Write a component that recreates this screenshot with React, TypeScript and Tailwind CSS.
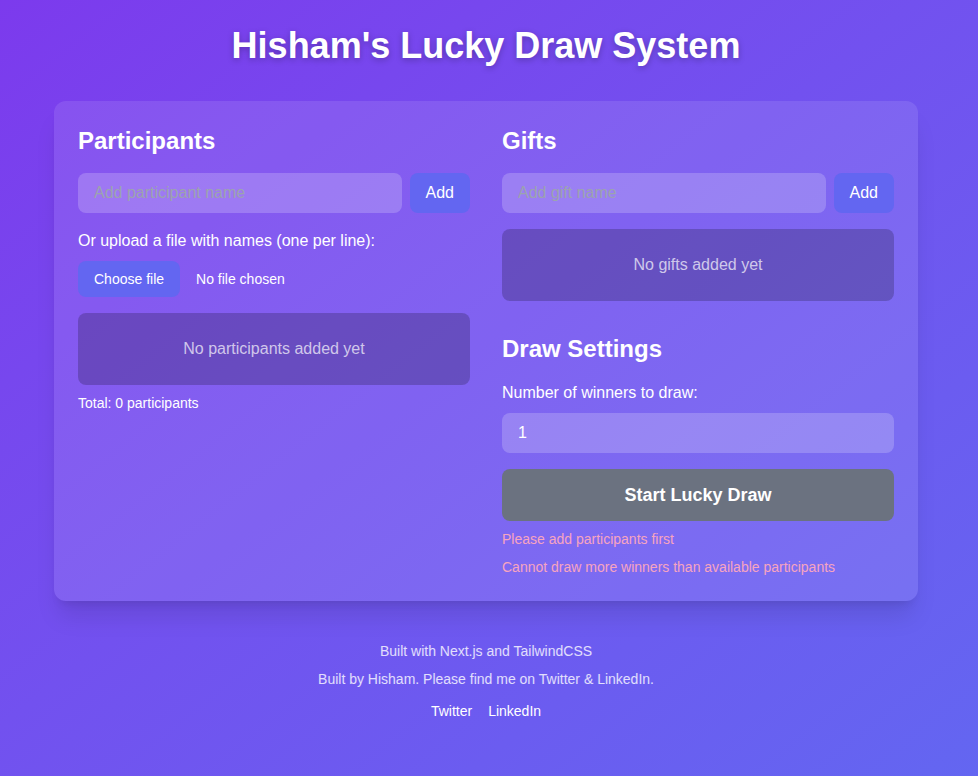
import React from "react";

export default function App() {
  return (
    <div
      className="min-h-[776px] w-full bg-linear-to-br from-[#7c3aed] to-[#6366f1] text-white"
      style={{ fontFamily: '"Liberation Sans", Arial, Helvetica, sans-serif' }}
    >
      <div className="ml-[54px] w-[864px] pt-[26px] pb-10">
        <h1 className="text-center text-[36px] leading-[40px] font-bold [text-shadow:0_2px_6px_rgba(0,0,0,0.25)]">
          Hisham's Lucky Draw System
        </h1>

        <div className="mt-[35px] rounded-xl bg-white/10 p-6 shadow-xl">
          <div className="grid grid-cols-2 gap-8">
            {/* Left column */}
            <div>
              <h2 className="mb-4 text-2xl font-bold">Participants</h2>
              <div className="mb-4 flex gap-2">
                <input
                  className="h-10 flex-1 rounded-lg bg-white/20 px-4 text-base text-white outline-none placeholder:text-[#9ca3af]"
                  placeholder="Add participant name"
                />
                <button className="h-10 rounded-lg bg-[#6366f1] px-4 text-base text-white">
                  Add
                </button>
              </div>
              <p className="mb-2 text-base">Or upload a file with names (one per line):</p>
              <div className="flex items-center">
                <span className="mr-4 rounded-lg bg-[#6366f1] px-4 py-2 text-sm leading-5">
                  Choose file
                </span>
                <span className="text-sm">No file chosen</span>
              </div>
              <div className="mt-4 rounded-lg bg-black/20 p-6 text-center text-base text-white/70">
                No participants added yet
              </div>
              <p className="mt-2 text-sm">Total: 0 participants</p>
            </div>

            {/* Right column */}
            <div>
              <h2 className="mb-4 text-2xl font-bold">Gifts</h2>
              <div className="mb-4 flex gap-2">
                <input
                  className="h-10 flex-1 rounded-lg bg-white/20 px-4 text-base text-white outline-none placeholder:text-[#9ca3af]"
                  placeholder="Add gift name"
                />
                <button className="h-10 rounded-lg bg-[#6366f1] px-4 text-base text-white">
                  Add
                </button>
              </div>
              <div className="rounded-lg bg-black/20 p-6 text-center text-base text-white/70">
                No gifts added yet
              </div>

              <h2 className="mt-8 mb-4 text-2xl font-bold">Draw Settings</h2>
              <p className="mb-2 text-base">Number of winners to draw:</p>
              <input
                className="h-10 w-full rounded-lg bg-white/20 px-4 text-base text-white outline-none"
                defaultValue="1"
              />
              <button className="mt-4 w-full rounded-lg bg-[#6b7280] py-3 text-lg font-bold text-white">
                Start Lucky Draw
              </button>
              <p className="mt-2 text-sm text-[#f7a4c0]">Please add participants first</p>
              <p className="mt-2 text-sm text-[#f7a4c0]">
                Cannot draw more winners than available participants
              </p>
            </div>
          </div>
        </div>

        <footer className="mt-10 text-center text-sm">
          <p className="mb-2 text-white/80">Built with Next.js and TailwindCSS</p>
          <p className="mb-3 text-white/80">Built by Hisham. Please find me on Twitter &amp; LinkedIn.</p>
          <div className="flex justify-center gap-4">
            <span>Twitter</span>
            <span>LinkedIn</span>
          </div>
        </footer>
      </div>
    </div>
  );
}
